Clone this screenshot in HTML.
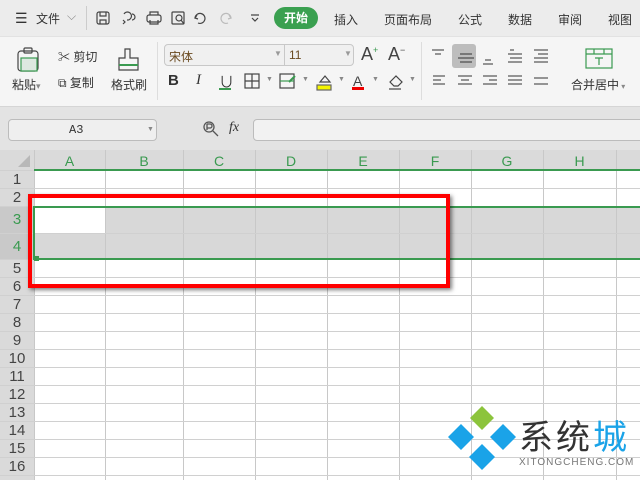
<!DOCTYPE html>
<html><head><meta charset="utf-8"><style>
*{margin:0;padding:0;box-sizing:border-box}
body{width:640px;height:480px;overflow:hidden;background:#fff;font-family:"Liberation Sans","Noto Sans CJK SC",sans-serif;position:relative;color:#333}
.a{position:absolute}
.t{font-size:12px;white-space:nowrap}
</style></head><body>
<div class="a" style="left:0;top:0;width:640px;height:36px;background:#ececec"></div>
<div class="a" style="left:0;top:36px;width:640px;height:70px;background:#f5f5f5;border-top:1px solid #e2e2e2"></div>
<div class="a" style="left:0;top:106px;width:640px;height:44px;background:#e3e3e3;border-top:1px solid #d5d5d5"></div>
<div class="a t" style="left:15px;top:10px;font-size:14px">☰</div>
<div class="a t" style="left:36px;top:10px">文件</div>
<div class="a t" style="left:67px;top:9px;color:#888">⌵</div>
<div class="a" style="left:86px;top:6px;width:1px;height:24px;background:#ccc"></div>
<svg class="a" style="left:94px;top:6px" width="180" height="24" fill="none" stroke="#444" stroke-width="1.2">
<rect x="3" y="6" width="12" height="12" rx="2"/><path d="M6 6v4h6V6M6 18v-4h6v4"/>
<path d="M30 8a4 4 0 1 1 3 6M29 14l2 2-2 2M38 8a3 3 0 1 1 0 6"/>
<rect x="53" y="9" width="14" height="7" rx="2"/><path d="M56 9V6h8v3M56 14v4h8v-4"/>
<rect x="78" y="6" width="12" height="12" rx="1"/><circle cx="85" cy="12" r="3"/><path d="M87 14l3 4"/>
<path d="M103 9l-2 3 3 1M101 12a5 5 0 1 1 3 5"/>
<path stroke="#bbb" d="M135 9l2 3-3 1M137 12a5 5 0 1 0-3 5"/>
<path d="M157 9h8M158 12l3 3 3-3"/>
</svg>
<div class="a t" style="left:274px;top:7px;width:44px;height:22px;border-radius:11px;background:#3aa050;color:#fff;text-align:center;line-height:22px;font-weight:bold">开始</div>
<div class="a t" style="left:334px;top:11px">插入</div>
<div class="a t" style="left:384px;top:11px">页面布局</div>
<div class="a t" style="left:458px;top:11px">公式</div>
<div class="a t" style="left:508px;top:11px">数据</div>
<div class="a t" style="left:558px;top:11px">审阅</div>
<div class="a t" style="left:608px;top:11px">视图</div>
<svg class="a" style="left:14px;top:46px" width="30" height="28" fill="none" stroke="#444" stroke-width="1.2">
<rect x="4" y="5" width="20" height="20" rx="3"/><rect x="10" y="2" width="8" height="5" rx="1"/><rect x="7" y="12" width="16" height="13" fill="#dde8e0" stroke="#3a9a50"/></svg>
<div class="a t" style="left:12px;top:76px">粘贴<span style="color:#888;font-size:9px">▾</span></div>
<div class="a t" style="left:58px;top:48px">✂ 剪切</div>
<div class="a t" style="left:58px;top:74px">⧉ 复制</div>
<svg class="a" style="left:115px;top:46px" width="26" height="28" fill="none" stroke="#444" stroke-width="1.2">
<path d="M10 3h5v9h8v12H4V12h6z"/><path d="M4 19h19" stroke="#3a9a50" stroke-width="2"/></svg>
<div class="a t" style="left:111px;top:76px">格式刷</div>
<div class="a" style="left:157px;top:42px;width:1px;height:58px;background:#ddd"></div>
<div class="a" style="left:164px;top:44px;width:190px;height:22px;border:1px solid #c8c8c8;border-radius:4px;background:#f0f0f0"></div>
<div class="a" style="left:284px;top:44px;width:1px;height:22px;background:#c8c8c8"></div>
<div class="a t" style="left:169px;top:48px;color:#6a4a20">宋体</div>
<div class="a t" style="left:289px;top:48px;color:#6a4a20">11</div>
<div class="a t" style="left:274px;top:49px;color:#999;font-size:8px">▼</div>
<div class="a t" style="left:344px;top:49px;color:#999;font-size:8px">▼</div>
<div class="a t" style="left:361px;top:44px;font-size:18px;color:#444">A<sup style="color:#3a9a50;font-size:9px">+</sup></div>
<div class="a t" style="left:388px;top:44px;font-size:18px;color:#444">A<sup style="font-size:9px">−</sup></div>
<div class="a t" style="left:168px;top:72px;font-size:15px;font-weight:bold">B</div>
<div class="a t" style="left:196px;top:72px;font-size:15px;font-style:italic;font-family:'Liberation Serif'">I</div>
<div class="a t" style="left:219px;top:71px;font-size:15px">∪</div>
<div class="a" style="left:219px;top:88px;width:12px;height:2px;background:#3a9a50"></div>
<svg class="a" style="left:244px;top:72px" width="170" height="20" fill="none" stroke="#444" stroke-width="1.2">
<rect x="1" y="2" width="14" height="14"/><path d="M8 2v14M1 9h14"/>
<rect x="36" y="2" width="14" height="14"/><path d="M36 9h14" stroke="#3a9a50"/><path d="M45 10l6-6" stroke="#3a9a50" stroke-width="2"/>
<path d="M76 10l5-6 5 6z"/><rect x="73" y="13" width="14" height="5" fill="#f5f500" stroke="#666"/>
<text x="109" y="14" font-size="14" fill="#444" stroke="none" font-family="Liberation Sans">A</text><rect x="108" y="15" width="12" height="3" fill="#e00" stroke="none"/>
<path d="M146 10l6-6 6 6-4 4h-4z"/><path d="M145 17h12"/>
</svg>
<div class="a t" style="left:302px;top:76px;color:#888;font-size:7px">▼</div>
<div class="a t" style="left:266px;top:76px;color:#888;font-size:7px">▼</div>
<div class="a t" style="left:338px;top:76px;color:#888;font-size:7px">▼</div>
<div class="a t" style="left:372px;top:76px;color:#888;font-size:7px">▼</div>
<div class="a t" style="left:409px;top:76px;color:#888;font-size:7px">▼</div>
<div class="a" style="left:421px;top:42px;width:1px;height:58px;background:#ddd"></div>
<div class="a" style="left:452px;top:44px;width:24px;height:24px;background:#bdbdbd;border-radius:3px"></div>
<svg class="a" style="left:430px;top:46px" width="130" height="46" fill="none" stroke="#333" stroke-width="1.1">
<path d="M2 4h12M5 8h6M30 8h12M28 12h16M30 16h12M55 14h6M53 18h10M80 4h4M78 8h14M80 12h12M78 16h14M104 4h14M108 8h10M104 12h14M104 16h14"/>
<path d="M3 30h12M3 34h8M3 38h12M28 30h14M31 34h8M28 38h14M53 30h14M59 34h8M53 38h14M78 30h14M78 34h14M78 38h14M104 32h14M104 38h14"/>
</svg>
<svg class="a" style="left:584px;top:48px" width="30" height="22" fill="none" stroke="#3a9a50" stroke-width="1.2"><rect x="2" y="1" width="26" height="19"/><path d="M2 6h26M10 1v5M20 1v5M11 10h8M15 10v7"/></svg>
<div class="a t" style="left:571px;top:76px">合并居中<span style="color:#888;font-size:8px"> ▾</span></div>
<div class="a" style="left:8px;top:119px;width:149px;height:22px;border:1px solid #bcbcbc;border-radius:4px;background:#efefef"></div>
<div class="a t" style="left:69px;top:123px;font-family:'Liberation Mono';font-size:12px">A3</div>
<div class="a t" style="left:147px;top:126px;font-size:7px;color:#888">▼</div>
<svg class="a" style="left:202px;top:120px" width="18" height="18" fill="none" stroke="#555" stroke-width="1.3"><circle cx="7" cy="7" r="5"/><path d="M11 11l5 5M5 4v6M5 4h3a2 2 0 0 1 0 4H5"/></svg>
<div class="a t" style="left:229px;top:120px;font-size:14px;font-style:italic;font-family:'Liberation Serif'">fx</div>
<div class="a" style="left:253px;top:119px;width:400px;height:22px;border:1px solid #bcbcbc;border-radius:4px;background:#f2f2f2"></div>
<div id="g"></div>
<script>
var h='';
var cols=[34,105,183,255,327,399,471,543,616,700];
var L='ABCDEFGH';
h+='<div class="a" style="left:0;top:150px;width:640px;height:20px;background:#dadada"></div>';
h+='<div class="a" style="left:0;top:150px;width:34px;height:330px;background:#dadada"></div>';
h+='<div class="a" style="left:0;top:207px;width:34px;height:52px;background:#c9c9c9"></div>';
h+='<div class="a" style="left:34px;top:207px;width:606px;height:52px;background:#d8d8d8"></div>';
h+='<div class="a" style="left:35px;top:208px;width:70px;height:25px;background:#fff"></div>';
h+='<div class="a" style="left:18px;top:155px;width:0;height:0;border-left:12px solid transparent;border-bottom:12px solid #b8b8b8"></div>';
for(var i=0;i<cols.length;i++){h+='<div class="a" style="left:'+cols[i]+'px;top:150px;width:1px;height:330px;background:#c8c8c8"></div>';
 if(i<8)h+='<div class="a t" style="left:'+cols[i]+'px;top:153px;width:'+(cols[i+1]-cols[i])+'px;text-align:center;font-size:14px;color:#3a9a50">'+L[i]+'</div>';}
var rows=[170,188,206,233,259,277,295];for(var y=313;y<=480;y+=18)rows.push(y);
for(var i=0;i<rows.length;i++){h+='<div class="a" style="left:0;top:'+rows[i]+'px;width:640px;height:1px;background:#d0d0d0"></div>';
 if(i<rows.length-1){var c=(i==2||i==3)?'#3a9a50':'#444';h+='<div class="a t" style="left:0;top:'+(rows[i]+(rows[i+1]-rows[i]-17)/2)+'px;width:34px;text-align:center;font-size:15px;color:'+c+'">'+(i+1)+'</div>';}}
h+='<div class="a" style="left:34px;top:169px;width:606px;height:2px;background:#3a9a50"></div>';
h+='<div class="a" style="left:34px;top:206px;width:606px;height:2px;background:#3a9a50"></div>';
h+='<div class="a" style="left:34px;top:258px;width:606px;height:2px;background:#3a9a50"></div>';
h+='<div class="a" style="left:33px;top:206px;width:2px;height:54px;background:#3a9a50"></div>';
h+='<div class="a" style="left:34px;top:256px;width:5px;height:5px;background:#3a9a50"></div>';
h+='<div class="a" style="left:28px;top:194px;width:422px;height:94px;border:4px solid #f00;box-shadow:2px 2px 4px rgba(0,0,0,.5)"></div>';
document.getElementById('g').innerHTML=h;
</script>
<svg class="a" style="left:447px;top:405px" width="70" height="66"><path d="M35 1l12 12-12 12-12-12z" fill="#8cc43c"/><path d="M14 19l13 13-13 13L1 32z" fill="#1aa3e8"/><path d="M56 19l13 13-13 13-13-13z" fill="#1aa3e8"/><path d="M35 39l13 13-13 13-13-13z" fill="#1aa3e8"/></svg>
<div class="a t" style="left:519px;top:410px;font-size:34px;color:#333;letter-spacing:3px">系统<span style="color:#1aa3e8">城</span></div>
<div class="a t" style="left:519px;top:457px;font-size:10px;color:#777;letter-spacing:1px">XITONGCHENG.COM</div>
</body></html>
